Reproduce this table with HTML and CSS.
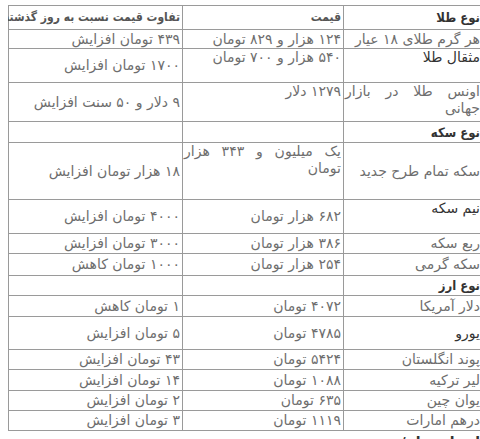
FILE: index.html
```html
<!DOCTYPE html>
<html lang="fa">
<head>
<meta charset="utf-8">
<title>قیمت طلا، سکه و ارز</title>
<link rel="stylesheet" href="styles.css">
</head>
<body>
<table class="prices" dir="rtl">
  <colgroup>
    <col class="c-name">
    <col class="c-price">
    <col class="c-diff">
  </colgroup>
  <tr class="h24">
    <td class="head cat">نوع طلا</td>
    <td class="head soft">قیمت</td>
    <td class="head soft nowrap">تفاوت قیمت نسبت به روز گذشته</td>
  </tr>
  <tr class="h19">
    <td>هر گرم طلای ۱۸ عیار</td>
    <td>۱۲۴ هزار و ۸۲۹ تومان</td>
    <td>۴۳۹ تومان افزایش</td>
  </tr>
  <tr class="h34">
    <td class="top dark">مثقال طلا</td>
    <td class="top">۵۴۰ هزار و ۷۰۰ تومان</td>
    <td>۱۷۰۰ تومان افزایش</td>
  </tr>
  <tr class="h39">
    <td class="top just">اونس طلا در بازار جهانی</td>
    <td class="top">۱۲۷۹ دلار</td>
    <td>۹ دلار و ۵۰ سنت افزایش</td>
  </tr>
  <tr class="h21">
    <td class="head cat">نوع سکه</td>
    <td></td>
    <td></td>
  </tr>
  <tr class="h57">
    <td>سکه تمام طرح جدید</td>
    <td class="top just">یک میلیون و ۳۴۳ هزار تومان</td>
    <td>۱۸ هزار تومان افزایش</td>
  </tr>
  <tr class="h34">
    <td class="top dark">نیم سکه</td>
    <td>۶۸۲ هزار تومان</td>
    <td>۴۰۰۰ تومان افزایش</td>
  </tr>
  <tr class="h20">
    <td>ربع سکه</td>
    <td>۳۸۶ هزار تومان</td>
    <td>۳۰۰۰ تومان افزایش</td>
  </tr>
  <tr class="h22">
    <td>سکه گرمی</td>
    <td>۲۵۴ هزار تومان</td>
    <td>۱۰۰۰ تومان کاهش</td>
  </tr>
  <tr class="h20">
    <td class="head cat">نوع ارز</td>
    <td></td>
    <td></td>
  </tr>
  <tr class="h21">
    <td>دلار آمریکا</td>
    <td>۴۰۷۲ تومان</td>
    <td>۱ تومان کاهش</td>
  </tr>
  <tr class="h33">
    <td class="dark">یورو</td>
    <td>۴۷۸۵ تومان</td>
    <td>۵ تومان افزایش</td>
  </tr>
  <tr class="h20">
    <td>پوند انگلستان</td>
    <td>۵۴۲۴ تومان</td>
    <td>۴۳ تومان افزایش</td>
  </tr>
  <tr class="h21">
    <td>لیر ترکیه</td>
    <td>۱۰۸۸ تومان</td>
    <td>۱۴ تومان افزایش</td>
  </tr>
  <tr class="h20">
    <td>یوان چین</td>
    <td>۶۳۵ تومان</td>
    <td>۲ تومان افزایش</td>
  </tr>
  <tr class="h20">
    <td>درهم امارات</td>
    <td>۱۱۱۹ تومان</td>
    <td>۳ تومان افزایش</td>
  </tr>
</table>
<p class="note" dir="rtl">انتهای پیام/</p>
</body>
</html>
```
FILE: styles.css
```css
html, body {
  background: #ffffff;
}
body {
  margin: 5px 0 0 8px;
  width: 474px;
  font-family: "DejaVu Sans", sans-serif;
  font-size: 14px;
  color: #6e6e6e;
}
.prices {
  border-collapse: collapse;
  width: 474px;
  table-layout: fixed;
  border: 1px solid #4a4a4a;
}
.c-name { width: 139px; }
.c-price { width: 161px; }
.c-diff { width: 174px; }
.prices td {
  border: 1px solid #9a9a9a;
  padding: 0 2px 0 1px;
  line-height: 17px;
  text-align: right;
  vertical-align: middle;
  overflow: visible;
}
.prices td + td {
  border-right-color: #555555;
}
.head {
  font-family: "DejaVu Sans Condensed", "DejaVu Sans", sans-serif;
  font-weight: bold;
  font-size: 12px;
  color: #333333;
}
.cat {
  font-size: 13px;
}
.nowrap {
  white-space: nowrap;
}
.soft {
  color: #555555;
}
.dark {
  color: #333333;
}
.top {
  vertical-align: top !important;
}
.just {
  text-align: justify !important;
  text-align-last: right;
}
.h19 td { height: 18px; }
.h20 td { height: 19px; }
.h21 td { height: 20px; }
.h22 td { height: 21px; }
.h24 td { height: 23px; }
.h33 td { height: 32px; }
.h34 td { height: 33px; }
.h39 td { height: 38px; }
.h57 td { height: 56px; }
.note {
  margin: 3px 0 0;
  text-align: right;
  font-weight: bold;
  color: #333333;
  padding-right: 2px;
}
```
